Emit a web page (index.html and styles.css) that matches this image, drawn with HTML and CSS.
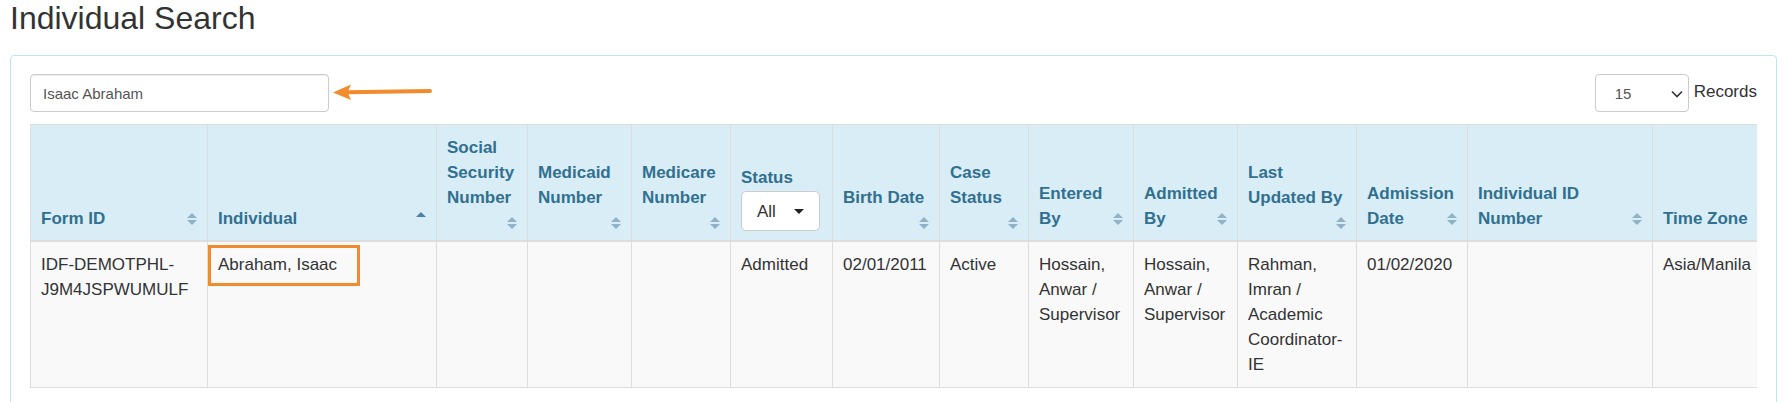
FILE: index.html
```html
<!DOCTYPE html>
<html lang="en">
<head>
  <meta charset="UTF-8">
  <meta name="viewport" content="width=device-width, initial-scale=1.0">
  <title>Individual Search</title>
  <link rel="stylesheet" href="styles.css">
</head>
<body>
  <div class="page">
    <h1 class="page-title">Individual Search</h1>

    <div class="panel">
      <div class="toolbar">
        <div class="search">
          <input type="text" class="search-input" value="Isaac Abraham">
          <!-- callout arrow pointing at the search box -->
          <svg class="callout-arrow" width="100" height="18" viewBox="0 0 100 18">
            <path d="M15 9.3 L97 8" stroke="#f28a2e" stroke-width="4" stroke-linecap="round" fill="none"/>
            <path d="M0 9.5 L18 1.5 L14.5 9.3 L18 17 Z" fill="#f28a2e"/>
          </svg>
        </div>

        <div class="page-size">
          <div class="select-box">
            <span>15</span>
            <svg width="12" height="8" viewBox="0 0 12 8">
              <path d="M1 1.5 L6 6.5 L11 1.5" stroke="#333" stroke-width="1.6" fill="none"/>
            </svg>
          </div>
          <span class="records-label">Records</span>
        </div>
      </div>

      <div class="table-wrap">
        <table class="results">
          <colgroup>
            <col class="c-form">
            <col class="c-individual">
            <col class="c-ssn">
            <col class="c-medicaid">
            <col class="c-medicare">
            <col class="c-status">
            <col class="c-birth">
            <col class="c-case">
            <col class="c-entered">
            <col class="c-admitted">
            <col class="c-updated">
            <col class="c-admission">
            <col class="c-idnum">
            <col class="c-zone">
          </colgroup>
          <thead>
            <tr>
              <th>Form ID<span class="sort"><svg width="10" height="12" viewBox="0 0 10 12"><path d="M0 5 L5 0 L10 5 Z M0 7 L10 7 L5 12 Z"/></svg></span></th>
              <th>Individual<span class="sort sort-asc"><svg width="10" height="12" viewBox="0 0 10 12"><path d="M0 5 L5 0 L10 5 Z"/></svg></span></th>
              <th>Social Security Number<span class="sort"><svg width="10" height="12" viewBox="0 0 10 12"><path d="M0 5 L5 0 L10 5 Z M0 7 L10 7 L5 12 Z"/></svg></span></th>
              <th>Medicaid Number<span class="sort"><svg width="10" height="12" viewBox="0 0 10 12"><path d="M0 5 L5 0 L10 5 Z M0 7 L10 7 L5 12 Z"/></svg></span></th>
              <th>Medicare Number<span class="sort"><svg width="10" height="12" viewBox="0 0 10 12"><path d="M0 5 L5 0 L10 5 Z M0 7 L10 7 L5 12 Z"/></svg></span></th>
              <th>
                Status
                <div class="status-filter">
                  <span>All</span>
                  <svg width="10" height="5" viewBox="0 0 10 5"><path d="M0 0 L10 0 L5 5 Z" fill="#222"/></svg>
                </div>
              </th>
              <th>Birth Date<span class="sort"><svg width="10" height="12" viewBox="0 0 10 12"><path d="M0 5 L5 0 L10 5 Z M0 7 L10 7 L5 12 Z"/></svg></span></th>
              <th>Case Status<span class="sort"><svg width="10" height="12" viewBox="0 0 10 12"><path d="M0 5 L5 0 L10 5 Z M0 7 L10 7 L5 12 Z"/></svg></span></th>
              <th>Entered By<span class="sort"><svg width="10" height="12" viewBox="0 0 10 12"><path d="M0 5 L5 0 L10 5 Z M0 7 L10 7 L5 12 Z"/></svg></span></th>
              <th>Admitted By<span class="sort"><svg width="10" height="12" viewBox="0 0 10 12"><path d="M0 5 L5 0 L10 5 Z M0 7 L10 7 L5 12 Z"/></svg></span></th>
              <th>Last Updated By<span class="sort"><svg width="10" height="12" viewBox="0 0 10 12"><path d="M0 5 L5 0 L10 5 Z M0 7 L10 7 L5 12 Z"/></svg></span></th>
              <th>Admission Date<span class="sort"><svg width="10" height="12" viewBox="0 0 10 12"><path d="M0 5 L5 0 L10 5 Z M0 7 L10 7 L5 12 Z"/></svg></span></th>
              <th>Individual ID Number<span class="sort"><svg width="10" height="12" viewBox="0 0 10 12"><path d="M0 5 L5 0 L10 5 Z M0 7 L10 7 L5 12 Z"/></svg></span></th>
              <th>Time Zone<span class="sort"><svg width="10" height="12" viewBox="0 0 10 12"><path d="M0 5 L5 0 L10 5 Z M0 7 L10 7 L5 12 Z"/></svg></span></th>
            </tr>
          </thead>
          <tbody>
            <tr>
              <td>IDF-DEMOTPHL-J9M4JSPWUMULF</td>
              <td><div class="highlight">Abraham, Isaac</div></td>
              <td></td>
              <td></td>
              <td></td>
              <td>Admitted</td>
              <td>02/01/2011</td>
              <td>Active</td>
              <td>Hossain, Anwar / Supervisor</td>
              <td>Hossain, Anwar / Supervisor</td>
              <td>Rahman, Imran / Academic Coordinator-IE</td>
              <td>01/02/2020</td>
              <td></td>
              <td>Asia/Manila</td>
            </tr>
          </tbody>
        </table>
      </div>
    </div>
  </div>
</body>
</html>
```

FILE: styles.css
```css
body {
  margin: 0;
  padding: 0;
  font-family: "Liberation Sans", Arial, Helvetica, sans-serif;
  color: #333;
  background-color: #fff;
}

.page {
  padding: 1px 10px 0 10px;
}

.page-title {
  margin: 0 0 19px 0;
  font-size: 32px;
  line-height: 35px;
  font-weight: normal;
  color: #333;
}

.panel {
  border: 1px solid #bce8f1;
  border-radius: 4px;
  padding: 18px 19px 40px 19px;
  background-color: #fff;
}

.toolbar {
  display: flex;
  justify-content: space-between;
  align-items: flex-start;
  margin-bottom: 12px;
}

.search {
  display: flex;
  align-items: center;
}

.search-input {
  box-sizing: border-box;
  width: 299px;
  height: 38px;
  padding: 6px 12px;
  font-family: "Liberation Sans", Arial, sans-serif;
  font-size: 15px;
  color: #555;
  border: 1px solid #ccc;
  border-radius: 4px;
  box-shadow: inset 0 1px 1px rgba(0, 0, 0, 0.075);
  outline: none;
}

.callout-arrow {
  display: block;
  margin-left: 4px;
  margin-top: -2px;
}

.page-size {
  display: flex;
  align-items: flex-start;
}

.select-box {
  box-sizing: border-box;
  width: 94px;
  height: 38px;
  padding: 0 5px 0 19px;
  display: flex;
  align-items: center;
  justify-content: space-between;
  border: 1px solid #ccc;
  border-radius: 4px;
  font-size: 15px;
  color: #555;
}

.select-box svg {
  margin-top: 1px;
}

.records-label {
  margin-left: 5px;
  margin-top: 5px;
  font-size: 17px;
  line-height: 25px;
}

.table-wrap {
  overflow: hidden;
}

.results {
  table-layout: fixed;
  border-collapse: collapse;
  width: 1763px;
  font-size: 17px;
  line-height: 25px;
}

.c-form { width: 177px; }
.c-individual { width: 229px; }
.c-ssn { width: 91px; }
.c-medicaid { width: 104px; }
.c-medicare { width: 99px; }
.c-status { width: 102px; }
.c-birth { width: 107px; }
.c-case { width: 89px; }
.c-entered { width: 105px; }
.c-admitted { width: 104px; }
.c-updated { width: 119px; }
.c-admission { width: 111px; }
.c-idnum { width: 185px; }
.c-zone { width: 141px; }

.results th {
  padding: 10px 10px 9px 10px;
  text-align: left;
  vertical-align: bottom;
  font-weight: bold;
  color: #31708f;
  background-color: #d9edf7;
  border: 1px solid #ddd;
  border-bottom-width: 2px;
}

.results td {
  padding: 10px;
  vertical-align: top;
  background-color: #f9f9f9;
  border: 1px solid #ddd;
}

.sort {
  float: right;
  height: 25px;
  margin: 0 0 -4px 9px;
  display: flex;
  align-items: center;
}

.sort svg {
  display: block;
  fill: #8fb2c8;
}

.sort-asc svg {
  fill: #4f7f9e;
  margin-top: -1px;
}

.status-filter {
  box-sizing: border-box;
  width: 79px;
  height: 40px;
  margin-top: 1px;
  padding: 0 15px;
  display: flex;
  align-items: center;
  justify-content: space-between;
  background-color: #fff;
  border: 1px solid #ccc;
  border-radius: 5px;
  font-weight: normal;
  color: #333;
}

.highlight {
  box-sizing: border-box;
  width: 152px;
  margin: -7px 0 0 -10px;
  padding: 4px 6px 6px 7px;
  border: 3px solid #f28a2e;
}
```
